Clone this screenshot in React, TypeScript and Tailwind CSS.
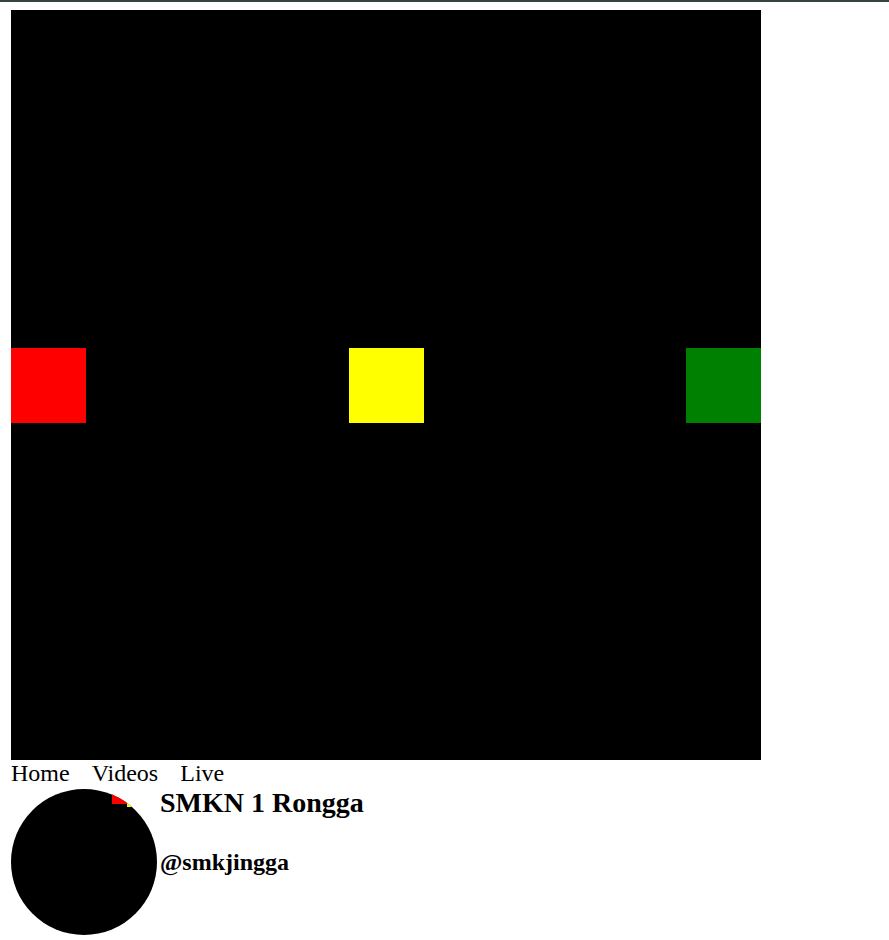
import React from "react";

export default function App() {
  return (
    <div className="min-h-[940px] bg-white text-black font-['Liberation_Serif',serif]">
      <div className="h-[2px] bg-[#384242]" />
      <div className="pl-[11px] pt-[8px]">
        <div className="flex h-[750px] w-[750px] items-center justify-between bg-black">
          <div className="h-[75px] w-[75px] bg-[#ff0000]" />
          <div className="h-[75px] w-[75px] bg-[#ffff00]" />
          <div className="h-[75px] w-[75px] bg-[#008000]" />
        </div>
        <nav className="flex gap-[22px] text-[24px] leading-[27px]">
          <span>Home</span>
          <span>Videos</span>
          <span>Live</span>
        </nav>
        <div className="mt-[2px] flex items-start">
          <div className="relative h-[146px] w-[146px] shrink-0 overflow-hidden rounded-full bg-black">
            <div className="absolute left-[101px] top-0 h-[15px] w-[15px] bg-[#ff0000]" />
            <div className="absolute left-[116px] top-0 h-[18px] w-[15px] bg-[#ffff00]" />
          </div>
          <div className="ml-[3px] flex flex-col">
            <h2 className="mt-[-2px] text-[28px] font-bold leading-[32px]">SMKN 1 Rongga</h2>
            <h3 className="mt-[29px] text-[24px] font-bold leading-[28px]">@smkjingga</h3>
          </div>
        </div>
      </div>
    </div>
  );
}
